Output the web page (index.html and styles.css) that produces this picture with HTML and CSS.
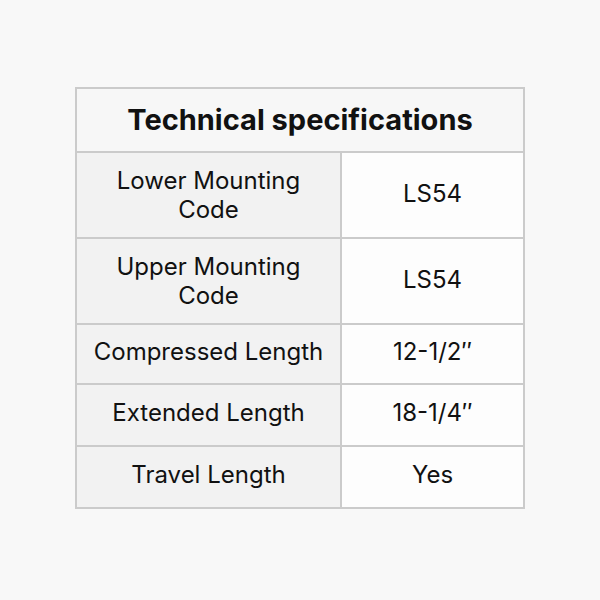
FILE: index.html
```html
<!DOCTYPE html>
<html>
<head>
<meta charset="utf-8">
<link rel="stylesheet" href="styles.css">
</head>
<body>
<div class="page">
  <table class="specs">
    <colgroup><col class="c-k"><col class="c-v"></colgroup>
    <thead>
      <tr class="r-head"><th colspan="2">Technical specifications</th></tr>
    </thead>
    <tbody>
      <tr class="r-tall"><td class="k">Lower Mounting<br>Code</td><td class="v">LS54</td></tr>
      <tr class="r-tall"><td class="k">Upper Mounting<br>Code</td><td class="v">LS54</td></tr>
      <tr class="r-a"><td class="k">Compressed Length</td><td class="v">12-1/2″</td></tr>
      <tr class="r-b"><td class="k">Extended Length</td><td class="v">18-1/4″</td></tr>
      <tr class="r-b"><td class="k">Travel Length</td><td class="v">Yes</td></tr>
    </tbody>
  </table>
</div>
</body>
</html>
```
FILE: styles.css
```css
html, body {
  margin: 0;
  padding: 0;
  background: #f8f8f8;
}
.page {
  width: 600px;
  height: 600px;
  padding-top: 87px;
  padding-left: 75px;
  box-sizing: border-box;
}
.specs {
  border-collapse: collapse;
  width: 448px;
  table-layout: fixed;
  font-family: Inter, "Liberation Sans", Arial, sans-serif;
  color: #111;
}
.c-k { width: 265px; }
.c-v { width: 183px; }
.specs th, .specs td {
  border: 2px solid #cbcbcb;
  text-align: center;
  vertical-align: middle;
  padding: 0;
}
.specs th {
  background: #f7f7f7;
  font-size: 29px;
  font-weight: 700;
  height: 60px;
  padding-bottom: 2px;
}
.specs td {
  font-size: 24px;
  line-height: 29px;
}
.specs td.k {
  background: #f2f2f2;
}
.specs td.v {
  background: #fdfdfd;
}
.r-tall td.k { height: 84px; }
.r-tall td.v { height: 80px; padding-bottom: 4px; }
.r-a td { height: 52px; padding-bottom: 6px; }
.r-b td { height: 54px; padding-bottom: 6px; }
```
